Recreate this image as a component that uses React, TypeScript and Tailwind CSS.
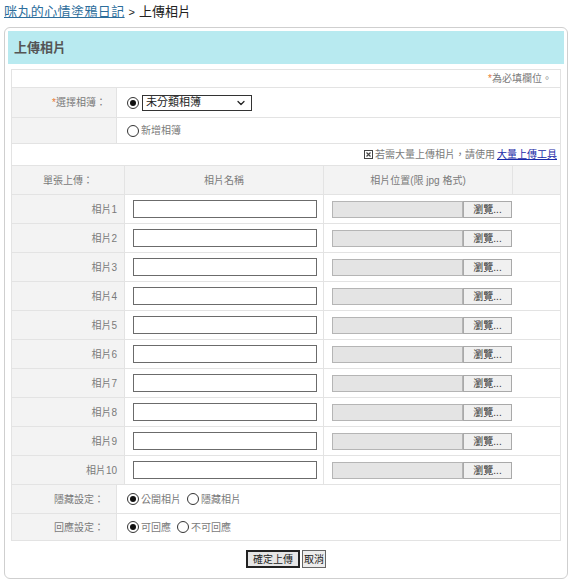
import { ChevronDown } from "lucide-react";

const font = "font-['Liberation_Sans','Noto_Sans_CJK_TC',sans-serif]";

function Radio({ checked }: { checked?: boolean }) {
  return (
    <span className="inline-flex h-[12px] w-[12px] shrink-0 items-center justify-center rounded-full border border-[#333] bg-white">
      {checked && <span className="h-[6px] w-[6px] rounded-full bg-[#111]" />}
    </span>
  );
}

function FileInput() {
  return (
    <div className="flex h-[17px] items-stretch">
      <div className="w-[131px] border border-[#b5b5b5] bg-[#e4e4e4]" />
      <div className="flex w-[49px] items-center justify-center border border-[#a9a9a9] bg-[#f0f0f0] text-[10px] text-[#333]">
        瀏覽...
      </div>
    </div>
  );
}

const photos = [1, 2, 3, 4, 5, 6, 7, 8, 9, 10];

export default function App() {
  return (
    <div className={`${font} w-[572px] h-[583px] bg-white text-[11px] text-[#7a7a7a]`}>
      {/* breadcrumb */}
      <div className="flex h-[24px] items-center pl-[4px] text-[13px] text-[#222]">
        <a href="#" className="tracking-[0.4px] text-[#2c6d9b] underline">咪丸的心情塗鴉日記</a>
        <span className="ml-[4px] text-[11px]">&gt;</span>
        <span className="ml-[4px]">上傳相片</span>
      </div>

      <div className="mx-[4px] mt-[3px] rounded-md border border-[#cfcfcf] p-[3px] pb-[10px]">
        <div className="flex h-[33px] items-center bg-[#b8eaf0] pl-[6px] text-[13px] font-bold text-[#555]">
          上傳相片
        </div>

        <div className="mx-[3px] mt-[5px] border border-[#e3e3e3]">
          {/* required note */}
          <div className="flex h-[18px] items-center justify-end border-b border-[#e3e3e3] pr-[8px] text-[10px]">
            <span className="text-[#e8772e]">*</span>為必填欄位。
          </div>

          {/* album select */}
          <div className="flex h-[30px] border-b border-[#e3e3e3]">
            <div className="flex w-[105px] items-center justify-end border-r border-[#e3e3e3] bg-[#f3f3f3] pr-[10px] text-[10px]">
              <span className="text-[#e8772e]">*</span>選擇相簿：
            </div>
            <div className="flex items-center gap-[3px] pl-[10px]">
              <Radio checked />
              <div className="flex h-[16px] w-[110px] items-center justify-between border border-[#333] pl-[3px] pr-[4px] text-[#222]">
                <span>未分類相簿</span>
                <ChevronDown className="h-[12px] w-[12px] text-[#222]" strokeWidth={2.5} />
              </div>
            </div>
          </div>

          <div className="flex h-[26px] border-b border-[#e3e3e3]">
            <div className="w-[105px] border-r border-[#e3e3e3] bg-[#f3f3f3]" />
            <div className="flex items-center gap-[2px] pl-[10px] text-[10px]">
              <Radio />
              新增相簿
            </div>
          </div>

          {/* bulk note */}
          <div className="flex h-[22px] items-center justify-end gap-[2px] border-b border-[#e3e3e3] pr-[3px] text-[10px]">
            <svg width="9" height="9" viewBox="0 0 9 9" className="text-[#444]">
              <rect x="0.5" y="0.5" width="8" height="8" fill="none" stroke="currentColor" />
              <path d="M2.5 2.5 L6.5 6.5 M6.5 2.5 L2.5 6.5" stroke="currentColor" strokeWidth="1.2" />
            </svg>
            <span>若需大量上傳相片，請使用</span>
            <a href="#" className="text-[#1a2aa8] underline">大量上傳工具</a>
          </div>

          {/* header */}
          <div className="flex h-[29px] border-b border-[#e3e3e3] bg-[#f3f3f3] text-[10px]">
            <div className="flex w-[113px] items-center justify-center border-r border-[#e3e3e3]">單張上傳：</div>
            <div className="flex w-[199px] items-center justify-center border-r border-[#e3e3e3]">相片名稱</div>
            <div className="flex w-[189px] items-center justify-center border-r border-[#e3e3e3]">相片位置(限 jpg 格式)</div>
            <div className="flex-1" />
          </div>

          {photos.map((n) => (
            <div key={n} className="flex h-[29px] border-b border-[#e3e3e3]">
              <div className="flex w-[113px] items-center justify-end border-r border-[#e3e3e3] bg-[#f3f3f3] pr-[7px] text-[10px]">
                相片{n}
              </div>
              <div className="flex w-[199px] items-center border-r border-[#e3e3e3] pl-[8px]">
                <div className="h-[18px] w-[184px] border border-[#6b6b6b] bg-white" />
              </div>
              <div className="flex flex-1 items-center pl-[8px]">
                <FileInput />
              </div>
            </div>
          ))}

          <div className="flex h-[29px] border-b border-[#e3e3e3] text-[10px]">
            <div className="flex w-[105px] items-center justify-end border-r border-[#e3e3e3] bg-[#f3f3f3] pr-[12px]">
              隱藏設定：
            </div>
            <div className="flex items-center gap-[2px] pl-[10px]">
              <Radio checked />
              <span>公開相片</span>
              <span className="ml-[2px]" />
              <Radio />
              <span>隱藏相片</span>
            </div>
          </div>

          <div className="flex h-[26px] text-[10px]">
            <div className="flex w-[105px] items-center justify-end border-r border-[#e3e3e3] bg-[#f3f3f3] pr-[12px]">
              回應設定：
            </div>
            <div className="flex items-center gap-[2px] pl-[10px]">
              <Radio checked />
              <span>可回應</span>
              <span className="ml-[2px]" />
              <Radio />
              <span>不可回應</span>
            </div>
          </div>
        </div>

        {/* buttons */}
        <div className="mt-[9px] flex justify-center gap-[2px] text-[10px] text-[#222]">
          <div className="flex h-[18px] w-[54px] items-center justify-center border-2 border-[#222] bg-[#e6e6e6]">
            確定上傳
          </div>
          <div className="flex h-[18px] w-[24px] items-center justify-center border border-[#666] bg-[#ececec]">
            取消
          </div>
        </div>
      </div>
    </div>
  );
}
